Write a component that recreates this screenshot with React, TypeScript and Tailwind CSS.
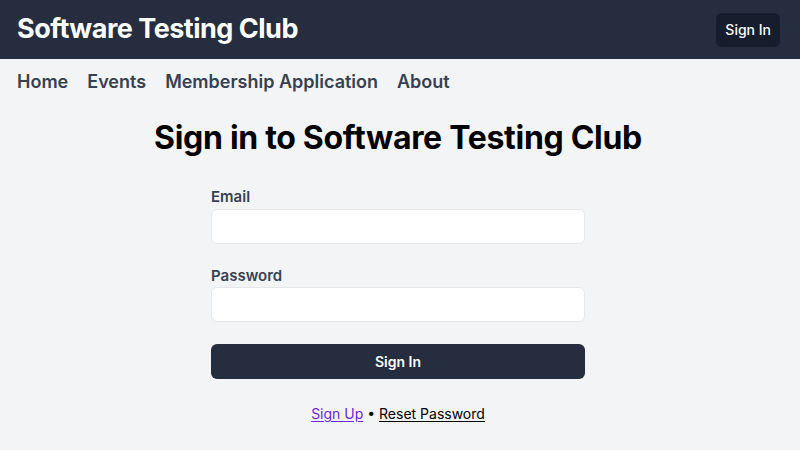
import React from "react";

export default function App() {
  return (
    <div className="min-h-[450px] bg-[#f3f4f6] font-['Inter',sans-serif]">
      <header className="flex h-[59px] items-center justify-between bg-[#252d3e] pl-[17px] pr-[20px]">
        <h1 className="text-[27px] font-bold text-white tracking-[-0.5px]">Software Testing Club</h1>
        <button className="h-[34px] rounded-md bg-[#161d2c] px-[9px] text-[14px] font-medium text-white">Sign In</button>
      </header>
      <nav className="flex h-[45px] items-center gap-[19px] px-[17px] text-[18px] font-semibold text-[#374151]">
        <a>Home</a>
        <a>Events</a>
        <a>Membership Application</a>
        <a>About</a>
      </nav>
      <main className="flex flex-col items-center pr-[4px]">
        <h2 className="mt-[10px] text-[32px] font-bold text-black tracking-[-0.3px]">Sign in to Software Testing Club</h2>
        <form className="mt-[24px] flex w-[374px] flex-col">
          <label className="text-[15px] font-semibold text-[#374151]">Email</label>
          <input className="mt-0 h-[35px] rounded-md border border-[#e5e7eb] bg-white" />
          <label className="mt-[21px] text-[15px] font-semibold text-[#374151]">Password</label>
          <input type="password" className="mt-0 h-[35px] rounded-md border border-[#e5e7eb] bg-white" />
          <button type="button" className="mt-[22px] h-[35px] rounded-md bg-[#252d3e] text-[14px] font-semibold text-white">Sign In</button>
        </form>
        <div className="mt-[24px] text-[14px] text-black">
          <a className="text-[#6d28d9] underline underline-offset-2">Sign Up</a>
          <span> • </span>
          <a className="underline underline-offset-2">Reset Password</a>
        </div>
      </main>
    </div>
  );
}
